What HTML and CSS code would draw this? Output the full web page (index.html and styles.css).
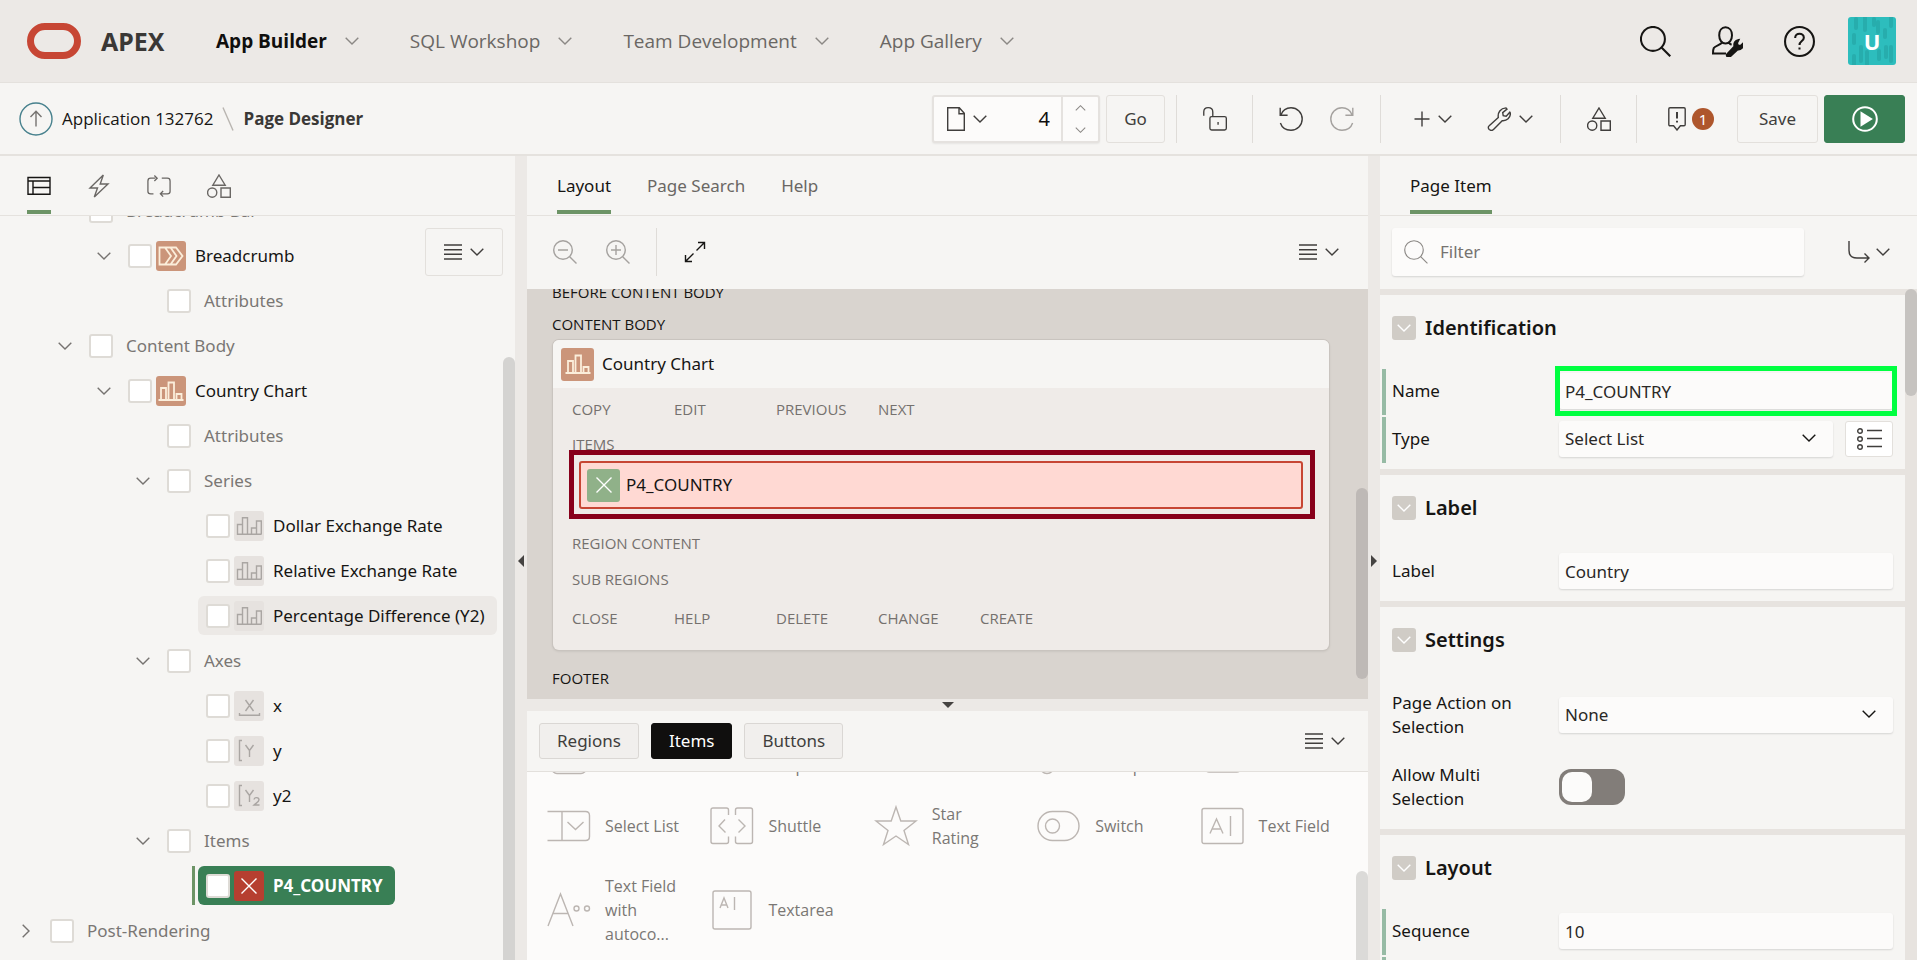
FILE: index.html
```html
<!DOCTYPE html>
<html lang="en">
<head>
<meta charset="utf-8">
<title>Page Designer</title>
<link rel="stylesheet" href="styles.css">
</head>
<body>
<svg class="sprite" aria-hidden="true">
  <symbol id="chev" viewBox="0 0 14 8"><path d="M.7.7 7 7 13.3.7"/></symbol>
  <symbol id="chev-right" viewBox="0 0 8 14"><path d="M.7.7 7 7 .7 13.3"/></symbol>
  <symbol id="search" viewBox="0 0 30 30"><circle cx="12.500" cy="12.500" r="11.600"/><path d="M20.800 20.800 29.300 29.300"/></symbol>
  <symbol id="zoom-out" viewBox="0 0 24 24"><circle cx="10" cy="10" r="9.300"/><path d="M16.700 16.700 23.500 23.500M5 10h10"/></symbol>
  <symbol id="zoom-in" viewBox="0 0 24 24"><circle cx="10" cy="10" r="9.300"/><path d="M16.700 16.700 23.500 23.500M5 10h10M10 5v10"/></symbol>
  <symbol id="expand" viewBox="0 0 22 22"><path d="M12.500 9.500 20 2M14 1.500h6.500V8M9.500 12.500 2 20M8 20.500H1.500V14"/></symbol>
  <symbol id="lines" viewBox="0 0 18 16"><path d="M0 1h18M0 5.700h18M0 10.300h18M0 15h18"/></symbol>
  <symbol id="admin" viewBox="0 0 31 31"><path d="M13.500 17.500c-3.800 0-6.300-3.800-6.300-8.300S9.500 1.200 13.500 1.200s6.500 3.500 6.500 8-2.600 8.300-6.500 8.300zM10 16.500c-1 2.300-7 3.300-8.200 5.500-.8 1.600-.8 3.500-.8 5.500h13M17 16.500c.3 1.200 1.300 1.800 2.600 2.300"/><path class="solid" d="M15 28.500 22.500 20.500c-.8-3 .5-6 4-6.500l-1.500 3 1 2.500 2.500.5 2.300-2.200c.6 3.600-2 6.200-5.300 5.600L17.500 31c-1.500.8-3.200-1-2.500-2.500z"/></symbol>
  <symbol id="help" viewBox="0 0 30 30"><circle cx="15" cy="15" r="14"/><path d="M10.800 11.500c0-2.500 1.900-4 4.200-4s4.200 1.500 4.200 3.800c0 3.200-4.200 3.200-4.200 7M15 20.800v1.900"/></symbol>
  <symbol id="up" viewBox="0 0 34 34"><circle cx="17" cy="17" r="16"/><path class="arrow" d="M17 24.500V9.500M11.500 15 17 9.300l5.500 5.700"/></symbol>
  <symbol id="page" viewBox="0 0 18 24"><path d="M.7.700h11.600l5 5.600v17H.7zM12 .7v6h5.300"/></symbol>
  <symbol id="unlock" viewBox="0 0 25 25"><path d="M.8 9V5.200C.8 2.500 2.700.700 5.400.700s4.800 1.800 4.800 4.500V10M9 10h13.500q1.800 0 1.800 1.800v10.400q0 1.800-1.800 1.800H9q-1.800 0-1.800-1.800V11.800Q7.200 10 9 10zM15.700 15.500v3"/></symbol>
  <symbol id="undo" viewBox="0 0 24 24"><path d="M1.200.7v7.600h7.400M1.800 8C3.600 3.400 7.200.8 12 .8c6.200 0 11.200 5 11.200 11.200S18.200 23.200 12 23.200C6.800 23.200 2.800 20.300 1.400 16"/></symbol>
  <symbol id="redo" viewBox="0 0 24 24"><path d="M22.800.7v7.600h-7.400M22.200 8C20.400 3.400 16.800.8 12 .8 5.800.8.800 5.800.8 12S5.800 23.200 12 23.200c5.200 0 9.200-2.900 10.600-7.200"/></symbol>
  <symbol id="plus" viewBox="0 0 16 16"><path d="M8 .5v15M.5 8h15"/></symbol>
  <symbol id="wrench" viewBox="0 0 24 24"><path d="M2.200 18.700 11.300 10.500C10.500 5.500 13.500 1.300 19 .9l1 1.200-4.300 3.500.5 3 3 .6 3.600-4 .6 1c0 4.500-3.400 7.900-8.200 7.500L6.500 22.500c-1 1-3 1-4.300 0-1.200-1.200-1.200-2.800 0-3.800z"/></symbol>
  <symbol id="shapes" viewBox="0 0 24 24"><path d="M12 1 18.200 11.200H5.800zM14 14h9.300v9.300H14z"/><circle cx="5.200" cy="18.600" r="4.600"/></symbol>
  <symbol id="notice" viewBox="0 0 18 24"><path d="M2 .800h14q1.200 0 1.200 1.200v15.500q0 1.200-1.200 1.200h-3.600L9 23l-3.400-4.300H2q-1.200 0-1.200-1.200V2Q.8.800 2 .8z"/><path class="thick" d="M9 5v6.500M9 13.700v1.800"/></symbol>
  <symbol id="run" viewBox="0 0 26 26"><circle cx="13" cy="13" r="11.800"/><path class="solid" d="M9.500 7 19 13 9.500 19z"/></symbol>
  <symbol id="layout" viewBox="0 0 24 20"><path d="M1 1.500h22v16.800H1zM1 5h22M6 5v13M6 11.500h17"/></symbol>
  <symbol id="bolt" viewBox="0 0 20 24"><path d="M14.300 1 1 14h7.500L5.300 23 19 10h-7.800z"/></symbol>
  <symbol id="cycle" viewBox="0 0 26 24"><path d="M9 3.500H4q-3 0-3 3V18q0 2.500 3 2.500h3M8 .700 11 3.500 8 6.500M16 3.500h6q3 0 3 3V18q0 2.500-3 2.500h-7M17.500 17.500 14.500 20.500l3 3"/></symbol>
  <symbol id="crumbs" viewBox="0 0 26 20"><path d="M1.500 1.500h16.500L24.500 10 18 18.500H1.500zM7 1.500 13 10 7 18.500M12.500 1.500 18.500 10l-6 8.500"/></symbol>
  <symbol id="chart" viewBox="0 0 26 20"><path d="M.5 19h25M3 19V7h5v12M10.500 19V1.500h5.500V19M18.500 19v-6h5v6"/></symbol>
  <symbol id="series" viewBox="0 0 26 18"><path d="M1.500 17.300V7.500h5v9.800M6.500 17.300V.700h5v16.600M15.500 17.300V11h5M20.500 17.300V4h4.800v13.300M.8 17.300h24.700"/></symbol>
  <symbol id="close" viewBox="0 0 16 16"><path d="M.5.500l15 15M15.500.500l-15 15"/></symbol>
  <symbol id="axis-x" viewBox="0 0 30 30"><path d="M5.500 22v2.200h20V22M11.500 9l8 11M19.500 9l-8 11"/></symbol>
  <symbol id="axis-y" viewBox="0 0 30 30"><path d="M8 4.500H5.500v20H8M11.500 9l4 5.500 4-5.500M15.500 14.500V21"/></symbol>
  <symbol id="axis-y2" viewBox="0 0 30 30"><path d="M8 4.500H5.500v20H8M11.500 9l4 5.500 4-5.500M15.500 14.500V21M20 18.500c.3-2.500 5-2.500 5 .3 0 2-3 3.300-5 5.200h5.500"/></symbol>
  <symbol id="goto" viewBox="0 0 22 22"><path d="M1 0v9.500c0 5 2.500 7.500 8 7.500h12M16.500 12.500l4.500 4.500-4.500 4.500"/></symbol>
  <symbol id="list" viewBox="0 0 25 22"><circle cx="3" cy="3" r="2.300"/><circle cx="3" cy="11" r="2.300"/><circle cx="3" cy="19" r="2.300"/><path d="M10 2.500h15M10 10.500h15M10 18.500h15"/></symbol>
  <symbol id="p-select" viewBox="0 0 44 44"><path d="M.5 7.500h38q4 0 4 4v21q0 4-4 4H.5M15 7.500v29M20.500 18l8 7.500 8-7.500"/></symbol>
  <symbol id="p-shuttle" viewBox="0 0 44 44"><path d="M18.500 11V6q0-2-2-2H3Q1 4 1 6v31.500q0 2 2 2h13.500q2 0 2-2v-5M25.500 11V6q0-2 2-2H40.500q2 0 2 2v31.500q0 2-2 2H27.500q-2 0-2-2v-5M15 15.500 9 22l6.500 6.500M28.500 15.500 35 22l-6.500 6.500"/></symbol>
  <symbol id="p-star" viewBox="0 0 44 44"><path d="M22 3 26.800 17H42L30 26.500 34.500 40.500 22 32 9.500 40.500 14 26.500 2 17H17.200z"/></symbol>
  <symbol id="p-switch" viewBox="0 0 44 44"><rect x="1" y="7.500" width="41" height="29" rx="14.500"/><circle cx="15.500" cy="22" r="7"/></symbol>
  <symbol id="p-text" viewBox="0 0 44 44"><rect x="1" y="4.500" width="41" height="35" rx="2"/><path d="M9 29.500 15.500 15l6.500 14.500M11 25h9M29.500 12v20"/></symbol>
  <symbol id="p-auto" viewBox="0 0 44 44"><path d="M1 38 13.500 6 26 38M6 25.500h15"/><circle cx="29.500" cy="20.500" r="2.500"/><circle cx="40" cy="20.500" r="2.500"/></symbol>
  <symbol id="p-area" viewBox="0 0 44 44"><rect x="3" y="3" width="38" height="38" rx="2"/><path d="M10 20l4-10 4 10M11.500 17h5M24.500 9v13"/></symbol>
  <symbol id="p-box" viewBox="0 0 44 44"><rect x="5" y="3" width="34" height="38.500" rx="5"/></symbol>
  <symbol id="p-popup" viewBox="0 0 44 44"><rect x="2" y="6" width="38" height="24" rx="3"/></symbol>
  <symbol id="p-radio" viewBox="0 0 44 44"><circle cx="10" cy="34.500" r="7"/><circle cx="10" cy="12" r="7"/><path d="M23 12h19"/></symbol>
  <symbol id="p-rich" viewBox="0 0 44 44"><rect x="4" y="4" width="36" height="36" rx="4"/></symbol>
</svg>

<header class="header">
  <a class="brand" href="#"><svg class="logo" viewBox="0 0 54 36"><rect x="3.500" y="3.500" width="47" height="29" rx="14.500"/></svg><span>APEX</span></a>
  <nav class="nav" aria-label="Main">
    <a class="current" href="#">App Builder<svg class="chev"><use href="#chev"/></svg></a>
    <a href="#">SQL Workshop<svg class="chev"><use href="#chev"/></svg></a>
    <a href="#">Team Development<svg class="chev"><use href="#chev"/></svg></a>
    <a href="#">App Gallery<svg class="chev"><use href="#chev"/></svg></a>
  </nav>
  <div class="account">
    <button type="button" aria-label="Search"><svg class="i31 heavy"><use href="#search"/></svg></button>
    <button type="button" aria-label="Administration"><svg class="i31 heavy"><use href="#admin"/></svg></button>
    <button type="button" aria-label="Help"><svg class="i31 heavy"><use href="#help"/></svg></button>
    <button type="button" class="avatar"><svg class="avatar-art" viewBox="0 0 48 48"><path d="M8 2v9M17 1v12M26 2v6M30 5v10M37 13v7M43 0v9M6 18v8M6 39v9M13 30v14M19 35v12M31 34v8M38 30v10M43 30v14"/></svg><span>U</span></button>
  </div>
</header>

<div class="toolbar">
  <nav class="trail" aria-label="Breadcrumb">
    <a href="#" class="up" aria-label="Up"><svg><use href="#up"/></svg></a>
    <a href="#">Application 132762</a>
    <svg class="slash" viewBox="0 0 12 24"><path d="M1 .500 11 23.500"/></svg>
    <strong>Page Designer</strong>
  </nav>
  <div class="tools">
    <div class="finder">
      <button type="button" class="finder-menu" aria-label="Page finder"><svg class="page"><use href="#page"/></svg><svg class="chev"><use href="#chev"/></svg></button>
      <input type="text" value="4" aria-label="Page number">
      <span class="spin"><button type="button" aria-label="Next page"><svg class="chev flip"><use href="#chev"/></svg></button><button type="button" aria-label="Previous page"><svg class="chev"><use href="#chev"/></svg></button></span>
    </div>
    <button type="button" class="btn go">Go</button>
    <button type="button" class="tool single" aria-label="Lock page"><svg class="i24"><use href="#unlock"/></svg></button>
    <span class="tool pair"><button type="button" aria-label="Undo"><svg class="i24"><use href="#undo"/></svg></button><button type="button" class="off" aria-label="Redo"><svg class="i24"><use href="#redo"/></svg></button></span>
    <span class="tool menus"><button type="button" aria-label="Create"><svg class="i16"><use href="#plus"/></svg><svg class="chev"><use href="#chev"/></svg></button><button type="button" aria-label="Utilities"><svg class="i24"><use href="#wrench"/></svg><svg class="chev"><use href="#chev"/></svg></button></span>
    <button type="button" class="tool single" aria-label="Shared components"><svg class="i24"><use href="#shapes"/></svg></button>
    <button type="button" class="tool messages" aria-label="Messages"><svg class="page"><use href="#notice"/></svg><span class="badge">1</span></button>
    <button type="button" class="btn save">Save</button>
    <button type="button" class="btn run" aria-label="Save and run page"><svg><use href="#run"/></svg></button>
  </div>
</div>

<main class="panes">
  <section class="pane">
    <div class="tabs tree-tabs">
      <button type="button" class="tab on" aria-label="Rendering"><svg class="i24"><use href="#layout"/></svg></button>
      <button type="button" class="tab" aria-label="Dynamic actions"><svg class="i24"><use href="#bolt"/></svg></button>
      <button type="button" class="tab" aria-label="Processing"><svg class="i24"><use href="#cycle"/></svg></button>
      <button type="button" class="tab" aria-label="Shared components"><svg class="i24"><use href="#shapes"/></svg></button>
    </div>
    <div class="tree-box">
      <ul class="tree">
        <li class="l1 group"><span class="arrow"></span><label><input type="checkbox"><span>Breadcrumb Bar</span></label></li>
        <li class="l2"><span class="arrow"><svg class="chev"><use href="#chev"/></svg></span><label><input type="checkbox"><i class="tile clay"><svg class="w26"><use href="#crumbs"/></svg></i><span>Breadcrumb</span></label></li>
        <li class="l3 group"><span class="arrow"></span><label><input type="checkbox"><span>Attributes</span></label></li>
        <li class="l1 group"><span class="arrow"><svg class="chev"><use href="#chev"/></svg></span><label><input type="checkbox"><span>Content Body</span></label></li>
        <li class="l2"><span class="arrow"><svg class="chev"><use href="#chev"/></svg></span><label><input type="checkbox"><i class="tile clay"><svg class="w26"><use href="#chart"/></svg></i><span>Country Chart</span></label></li>
        <li class="l3 group"><span class="arrow"></span><label><input type="checkbox"><span>Attributes</span></label></li>
        <li class="l3 group"><span class="arrow"><svg class="chev"><use href="#chev"/></svg></span><label><input type="checkbox"><span>Series</span></label></li>
        <li class="l4"><span class="arrow"></span><label><input type="checkbox"><i class="tile"><svg class="w26"><use href="#series"/></svg></i><span>Dollar Exchange Rate</span></label></li>
        <li class="l4"><span class="arrow"></span><label><input type="checkbox"><i class="tile"><svg class="w26"><use href="#series"/></svg></i><span>Relative Exchange Rate</span></label></li>
        <li class="l4 hover"><span class="arrow"></span><label><input type="checkbox"><i class="tile"><svg class="w26"><use href="#series"/></svg></i><span>Percentage Difference (Y2)</span></label></li>
        <li class="l3 group"><span class="arrow"><svg class="chev"><use href="#chev"/></svg></span><label><input type="checkbox"><span>Axes</span></label></li>
        <li class="l4"><span class="arrow"></span><label><input type="checkbox"><i class="tile"><svg class="i30"><use href="#axis-x"/></svg></i><span>x</span></label></li>
        <li class="l4"><span class="arrow"></span><label><input type="checkbox"><i class="tile"><svg class="i30"><use href="#axis-y"/></svg></i><span>y</span></label></li>
        <li class="l4"><span class="arrow"></span><label><input type="checkbox"><i class="tile"><svg class="i30"><use href="#axis-y2"/></svg></i><span>y2</span></label></li>
        <li class="l3 group"><span class="arrow"><svg class="chev"><use href="#chev"/></svg></span><label><input type="checkbox"><span>Items</span></label></li>
        <li class="l4 picked"><span class="arrow"></span><label><input type="checkbox"><i class="tile red"><svg class="i16"><use href="#close"/></svg></i><span>P4_COUNTRY</span></label></li>
        <li class="group"><span class="arrow"><svg class="chev-right"><use href="#chev-right"/></svg></span><label><input type="checkbox"><span>Post-Rendering</span></label></li>
      </ul>
      <button type="button" class="btn menu tree-menu" aria-label="Tree menu"><svg class="lines"><use href="#lines"/></svg><svg class="chev"><use href="#chev"/></svg></button>
      <div class="thumb tree-thumb"></div>
    </div>
  </section>

  <div class="splitter"><i class="tri left"></i></div>

  <section class="pane">
    <div class="tabs">
      <button type="button" class="tab on">Layout</button>
      <button type="button" class="tab">Page Search</button>
      <button type="button" class="tab">Help</button>
    </div>
    <div class="canvas-bar">
      <button type="button" class="off" aria-label="Zoom out"><svg class="i24"><use href="#zoom-out"/></svg></button>
      <button type="button" class="off" aria-label="Zoom in"><svg class="i24"><use href="#zoom-in"/></svg></button>
      <button type="button" class="expand" aria-label="Expand"><svg class="i22"><use href="#expand"/></svg></button>
      <button type="button" class="menu" aria-label="Layout menu"><svg class="lines"><use href="#lines"/></svg><svg class="chev"><use href="#chev"/></svg></button>
    </div>
    <div class="canvas">
      <h3 class="before">Before Content Body</h3>
      <h3>Content Body</h3>
      <article class="region">
        <h4><i class="tile clay big"><svg class="w26"><use href="#chart"/></svg></i>Country Chart</h4>
        <div class="slots">
          <div class="slot-row"><span>Copy</span><span>Edit</span><span>Previous</span><span>Next</span></div>
          <div class="slot-name">Items</div>
          <div class="item"><i class="tile green big"><svg class="i16"><use href="#close"/></svg></i>P4_COUNTRY<span class="frame"></span></div>
          <div class="slot">Region Content</div>
          <div class="slot">Sub Regions</div>
          <div class="slot-row"><span>Close</span><span>Help</span><span>Delete</span><span>Change</span><span>Create</span></div>
        </div>
      </article>
      <h3 class="footer">Footer</h3>
      <div class="thumb canvas-thumb"></div>
    </div>
    <div class="splitter flat"><i class="tri down"></i></div>
    <div class="gallery-bar">
      <button type="button" class="pill">Regions</button>
      <button type="button" class="pill on">Items</button>
      <button type="button" class="pill">Buttons</button>
      <button type="button" class="menu" aria-label="Gallery menu"><svg class="lines"><use href="#lines"/></svg><svg class="chev"><use href="#chev"/></svg></button>
    </div>
    <div class="gallery">
      <ul>
        <li><svg><use href="#p-box"/></svg><span>Password</span></li>
        <li><svg></svg><span>Percent Graph</span></li>
        <li><svg><use href="#p-popup"/></svg><span>Popup LOV</span></li>
        <li><svg><use href="#p-radio"/></svg><span>Radio Group</span></li>
        <li><svg><use href="#p-rich"/></svg><span>Rich Text Editor</span></li>
        <li><svg><use href="#p-select"/></svg><span>Select List</span></li>
        <li><svg><use href="#p-shuttle"/></svg><span>Shuttle</span></li>
        <li><svg><use href="#p-star"/></svg><span>Star Rating</span></li>
        <li><svg><use href="#p-switch"/></svg><span>Switch</span></li>
        <li><svg><use href="#p-text"/></svg><span>Text Field</span></li>
        <li><svg><use href="#p-auto"/></svg><span>Text Field with autoco...</span></li>
        <li><svg><use href="#p-area"/></svg><span>Textarea</span></li>
      </ul>
      <div class="thumb gallery-thumb"></div>
    </div>
  </section>

  <div class="splitter"><i class="tri right"></i></div>

  <section class="pane">
    <div class="tabs"><button type="button" class="tab on">Page Item</button></div>
    <div class="filter-bar">
      <label class="filter"><svg class="i24"><use href="#search"/></svg><input type="search" placeholder="Filter" aria-label="Filter properties"></label>
      <button type="button" class="goto" aria-label="Go to group"><svg class="i22"><use href="#goto"/></svg><svg class="chev"><use href="#chev"/></svg></button>
    </div>
    <div class="props">
      <form class="prop-list">
        <section class="prop-group">
          <h2><button type="button" aria-label="Collapse Identification"><svg class="chev"><use href="#chev"/></svg></button>Identification</h2>
          <div class="row required"><label for="name">Name</label><div class="control"><input id="name" type="text" value="P4_COUNTRY"><span class="frame"></span></div></div>
          <div class="row required"><label for="type">Type</label><div class="control"><select id="type"><option>Select List</option></select><svg class="chev"><use href="#chev"/></svg></div><button type="button" class="pick" aria-label="Quick picks"><svg><use href="#list"/></svg></button></div>
        </section>
        <section class="prop-group">
          <h2><button type="button" aria-label="Collapse Label"><svg class="chev"><use href="#chev"/></svg></button>Label</h2>
          <div class="row"><label for="label">Label</label><div class="control"><input id="label" type="text" value="Country"></div></div>
        </section>
        <section class="prop-group">
          <h2><button type="button" aria-label="Collapse Settings"><svg class="chev"><use href="#chev"/></svg></button>Settings</h2>
          <div class="row"><label for="action">Page Action on Selection</label><div class="control"><select id="action"><option>None</option></select><svg class="chev"><use href="#chev"/></svg></div></div>
          <div class="row"><label for="multi">Allow Multi Selection</label><div class="control"><input id="multi" class="switch" type="checkbox" role="switch"></div></div>
        </section>
        <section class="prop-group">
          <h2><button type="button" aria-label="Collapse Layout"><svg class="chev"><use href="#chev"/></svg></button>Layout</h2>
          <div class="row required"><label for="seq">Sequence</label><div class="control"><input id="seq" type="text" value="10"></div></div>
          <div class="row required"><label for="slot">Slot</label><div class="control"><select id="slot"><option>Region Body</option></select></div></div>
        </section>
      </form>
      <div class="track"><div class="thumb prop-thumb"></div></div>
    </div>
  </section>
</main>
</body>
</html>
```
FILE: styles.css
```css
* { box-sizing: border-box; }

html { background: #fff; }

body {
  margin: 0 3px 0 0;
  height: 100vh;
  overflow: hidden;
  display: flex;
  flex-direction: column;
  color: #161513;
  font: 17px/24px "Noto Sans", "Open Sans", sans-serif;
}

button, input, select { font: inherit; color: inherit; }
button { display: flex; align-items: center; justify-content: center; padding: 0; border: 0; background: none; }
a { color: inherit; text-decoration: none; }
ul { margin: 0; padding: 0; list-style: none; }
h2, h3, h4 { margin: 0; font-weight: 400; }

svg { display: block; flex: none; fill: none; stroke: currentColor; stroke-width: 1.4; }
.sprite { position: absolute; width: 0; height: 0; }
.solid { fill: currentColor; }
.thick { stroke-width: 2; }
.chev { width: 14px; height: 8px; }
.chev-right { width: 8px; height: 14px; }
.flip { transform: rotate(180deg); }
.lines { width: 18px; height: 16px; }
.page { width: 18px; height: 24px; }
.i16 { width: 16px; height: 16px; }
.i22 { width: 22px; height: 22px; }
.i24 { width: 24px; height: 24px; }
.i30 { width: 30px; height: 30px; }
.i31 { width: 31px; height: 31px; }
.w26 { width: 26px; height: 20px; }
.heavy { stroke-width: 2; }
.off { color: #a5a29f; }

/* header */
.header { display: flex; align-items: center; height: 83px; padding: 0 21px 0 27px; background: #ece9e6; border-bottom: 1px solid #e4e1dd; flex: none; }
.brand { display: flex; align-items: center; gap: 20px; width: 189px; font-size: 25px; font-weight: 700; color: #3a3836; }
.logo { width: 54px; height: 36px; stroke: #c74634; stroke-width: 7; }
.nav { display: flex; gap: 51px; font-family: "Open Sans", "Noto Sans", sans-serif; font-size: 19px; color: #6a6764; }
.nav a { display: flex; align-items: center; gap: 18px; }
.nav .current { color: #100f0e; font-weight: 700; }
.nav .chev { color: #8b8885; }
.account { display: flex; align-items: center; gap: 41px; margin-left: auto; }
.avatar { position: relative; width: 48px; height: 48px; margin-left: -8px; border-radius: 3px; background: #2dbdbd; color: #fff; font-size: 22px; font-weight: 700; overflow: hidden; }
.avatar-art { position: absolute; inset: 0; width: 48px; height: 48px; stroke: #27adad; stroke-width: 4; stroke-linecap: round; }
.avatar span { position: relative; }

/* toolbar */
.toolbar { display: flex; align-items: center; justify-content: space-between; height: 73px; padding: 0 12px 0 19px; border-bottom: 2px solid #e5e2de; background: #f6f5f3; flex: none; }
.trail { display: flex; align-items: center; gap: 9px; font-family: "Open Sans", "Noto Sans", sans-serif; }
.trail strong { font-weight: 700; color: #3a3836; }
.up svg { width: 34px; height: 34px; color: #47818d; }
.up .arrow { stroke: #2f5a63; }
.slash { width: 12px; height: 24px; color: #b9b5b0; }
.tools { display: flex; align-items: center; color: #403e3c; }
.btn { height: 48px; border: 1px solid #e3e0dc; border-radius: 3px; }
.finder { display: flex; height: 48px; width: 168px; margin-right: 6px; border: 2px solid #e5e2df; border-radius: 3px; background: #fcfbfa; box-shadow: 0 1px 2px #0001; }
.finder-menu { gap: 8px; padding-left: 13px; }
.finder input { flex: 1; min-width: 0; padding: 0 11px 0 0; border: 0; background: none; text-align: right; font-size: 20px; color: #100f0e; }
.spin { display: flex; flex-direction: column; width: 37px; border-left: 2px solid #e5e2df; }
.spin button { flex: 1; color: #8b8885; }
.spin .chev { width: 11px; height: 6px; }
.go { width: 59px; margin-right: 11px; }
.tool { display: flex; align-items: center; height: 48px; border-left: 1px solid #dfdcd8; }
.single { width: 76px; }
.pair { width: 128px; padding: 0 13px; }
.pair button { width: 51px; }
.menus { gap: 35px; width: 180px; padding-left: 33px; }
.menus button { gap: 8px; }
.messages { gap: 6px; padding: 0 23px 0 31px; }
.badge { width: 22px; height: 22px; border-radius: 50%; background: #ae562c; color: #fff; font-size: 15px; line-height: 22px; }
.save { width: 81px; margin-right: 6px; }
.run { width: 81px; background: #397f55; border-color: #397f55; color: #fff; }
.run svg { width: 26px; height: 26px; stroke-width: 2; }

/* panes */
.panes { flex: 1; min-height: 0; display: grid; grid-template-columns: 515fr 12px 841fr 12px 537fr; grid-template-rows: 100%; background: #f6f5f3; }
.pane { display: flex; flex-direction: column; min-width: 0; min-height: 0; overflow: hidden; }
.splitter { display: flex; align-items: center; justify-content: center; padding-top: 6px; background: #ece9e6; }
.splitter .tri { border: 6px solid transparent; }
.splitter .left { border-right-color: #454341; border-left: 0; }
.splitter .right { border-left-color: #454341; border-right: 0; }
.splitter .down { border-top-color: #454341; border-bottom: 0; }
.flat { height: 12px; padding: 0; flex: none; }

.tabs { display: flex; gap: 36px; height: 60px; padding: 0 30px; border-bottom: 1px solid #e5e2de; flex: none; }
.tree-tabs { padding: 0 27px; }
.tab { color: #6a6764; border-top: 6px solid transparent; border-bottom: 4px solid transparent; margin-bottom: 1px; }
.tab.on { color: #161513; border-bottom-color: #6d9466; }
.thumb { position: absolute; right: 0; width: 12px; border-radius: 6px; background: #d4d3d1; }

/* tree */
.tree-box { position: relative; flex: 1; min-height: 0; overflow: hidden; }
.tree { margin-top: -28px; }
.tree li { display: flex; height: 45px; padding: 3px 0 3px 10px; }
.tree .l1 { padding-left: 49px; }
.tree .l2 { padding-left: 88px; }
.tree .l3 { padding-left: 127px; }
.tree .l4 { padding-left: 166px; }
.arrow { display: flex; align-items: center; justify-content: center; width: 32px; color: #767370; flex: none; }
.tree label { display: flex; align-items: center; padding: 0 12px 0 8px; border-radius: 6px; white-space: nowrap; }
.tree input { appearance: none; width: 24px; height: 24px; margin: 0 4px 0 0; border: 2px solid #dedbd6; border-radius: 3px; background: #fff; }
.tree label span { margin-left: 9px; }
.tree .group { color: #7a7774; }
.hover label { background: #ece9e6; }
.picked label { position: relative; background: #397f55; color: #fff; font-weight: 700; }
.picked label::before { content: ""; position: absolute; left: -6px; top: 0; bottom: 0; width: 3px; background: #6d9466; }
.tile { display: flex; align-items: center; justify-content: center; width: 30px; height: 30px; border-radius: 3px; background: #e6e2df; color: #aaa6a3; flex: none; }
.tile.clay { background: #cb957a; color: #fbeedb; }
.tile.clay svg { stroke-width: 1.8; }
.tile.red { background: #b63f30; color: #fff; }
.tile.green { background: #90b189; color: #fff; }
.tile.big { width: 33px; height: 33px; }
.menu { gap: 8px; color: #403e3c; }
.tree-menu { position: absolute; right: 12px; top: 12px; width: 78px; background: #f6f5f3; }
.tree-thumb { top: 141px; bottom: -8px; }

/* layout canvas */
.canvas-bar { display: flex; align-items: center; height: 73px; padding: 0 29px 2px 26px; flex: none; }
.canvas-bar .off + .off { margin-left: 29px; }
.canvas-bar .expand { height: 48px; margin-left: 26px; padding-left: 27px; border-left: 1px solid #dfdcd8; }
.canvas-bar .menu, .gallery-bar .menu { margin-left: auto; }
.canvas { position: relative; flex: 1; min-height: 0; padding: 0 39px 0 25px; background: #d9d4cf; overflow: hidden; }
.canvas h3 { font: 15px/32px "Open Sans", "Noto Sans", sans-serif; text-transform: uppercase; }
.canvas .before { margin-top: -13px; }
.canvas .footer { margin-top: 12px; }
.region { margin-left: 1px; border-radius: 6px; background: #efebe8; overflow: hidden; box-shadow: 0 0 0 1px #c9c4bf, 0 1px 3px #0002; }
.region h4 { display: flex; align-items: center; gap: 8px; height: 48px; padding: 0 8px; background: #f6f5f3; }
.slots { padding: 0 19px 11px; font: 15px/24px "Open Sans", "Noto Sans", sans-serif; color: #75716e; text-transform: uppercase; }
.slot-row { display: grid; grid-template-columns: repeat(5, 102px); line-height: 42px; }
.slot-name { line-height: 28px; }
.item { position: relative; display: flex; align-items: center; gap: 6px; height: 48px; margin: 3px 7px 16px; padding: 0 6px; border: 2px solid #c74634; border-radius: 3px; background: #ffd9d3; color: #161513; font: 17px/24px "Noto Sans", "Open Sans", sans-serif; }
.item .frame { position: absolute; inset: -13px -14px -12px -12px; border: 5px solid #88001b; }
.slot { line-height: 36px; }
.canvas-thumb { top: 199px; height: 191px; background: #beb9b6; }

/* component gallery */
.gallery-bar { display: flex; align-items: center; gap: 12px; height: 61px; padding: 0 23px 0 12px; border-bottom: 1px solid #e3e0dc; flex: none; }
.pill { height: 36px; padding: 0 17px; border: 1px solid #dad7d4; border-radius: 3px; background: #f1efed; color: #403e3c; }
.pill.on { background: #100f0e; border-color: #100f0e; color: #fff; }
.gallery { position: relative; height: 188px; background: #fcfbfa; overflow: hidden; flex: none; }
.gallery ul { display: grid; grid-template-columns: repeat(5, 1fr); margin: -54px 12px 0; }
.gallery li { display: flex; align-items: center; gap: 14px; min-height: 72px; padding: 12px 18px 12px 8px; font: 16px/24px "Open Sans", "Noto Sans", sans-serif; color: #7a7774; }
.gallery li svg { width: 44px; height: 44px; color: #bcb6b2; }
.gallery-thumb { top: 99px; bottom: -8px; background: #dbdad8; }

/* property editor */
.filter-bar { display: flex; align-items: center; gap: 44px; height: 73px; padding: 0 27px 2px 12px; flex: none; }
.filter { display: flex; align-items: center; flex: 1; gap: 12px; height: 48px; padding: 0 12px; border-radius: 3px; background: #fcfbfa; color: #8b8885; box-shadow: 0 1px 2px #0002; }
.filter input { flex: 1; min-width: 0; padding: 0; border: 0; background: none; outline: 0; }
.filter input::placeholder { color: #767370; }
.goto { gap: 6px; color: #403e3c; }
.props { position: relative; display: flex; flex: 1; min-height: 0; overflow: hidden; }
.prop-list { flex: 1; min-width: 0; }
.track { position: relative; width: 12px; background: #e7e3df; }
.prop-thumb { top: 0; height: 107px; background: #c6c3c0; }
.prop-group { padding-bottom: 5px; border-top: 6px solid #e7e3df; }
.prop-group h2 { display: flex; align-items: center; gap: 9px; height: 73px; padding: 0 12px 7px; font-size: 20px; font-weight: 600; }
.prop-group h2 button { width: 24px; height: 24px; border-radius: 3px; background: #d0ccc6; color: #fff; }
.row { display: flex; align-items: center; min-height: 48px; padding: 11px 12px 13px; }
.row label { width: 167px; padding-right: 24px; }
.row.required { position: relative; padding: 0 12px 2px; }
.row.required::before { content: ""; position: absolute; left: 2px; top: 1px; bottom: 1px; width: 4px; background: #97bba5; }
.prop-group:nth-of-type(2) .row { padding: 0 12px 2px; }
.control { position: relative; flex: 1; display: flex; }
.control input:not(.switch), .control select { width: 100%; height: 36px; padding: 0 6px; border: 0; border-radius: 3px; background: #fcfbfa; color: #2a2826; box-shadow: 0 1px 2px #0002; appearance: none; }
.control .chev { position: absolute; right: 17px; top: 13px; pointer-events: none; }
.control .frame { position: absolute; inset: -7px -4px; border: 5px solid #00ff40; pointer-events: none; }
.pick { width: 48px; height: 36px; margin-left: 12px; border: 1px solid #e3e0dc; border-radius: 3px; background: #fff; color: #403e3c; }
.pick svg { width: 25px; height: 22px; }
.switch { appearance: none; display: flex; width: 66px; height: 36px; margin: 0; padding: 3px; border-radius: 12px; background: #827d79; }
.switch::before { content: ""; width: 30px; height: 30px; border-radius: 10px; background: #fcfbfa; }
```
